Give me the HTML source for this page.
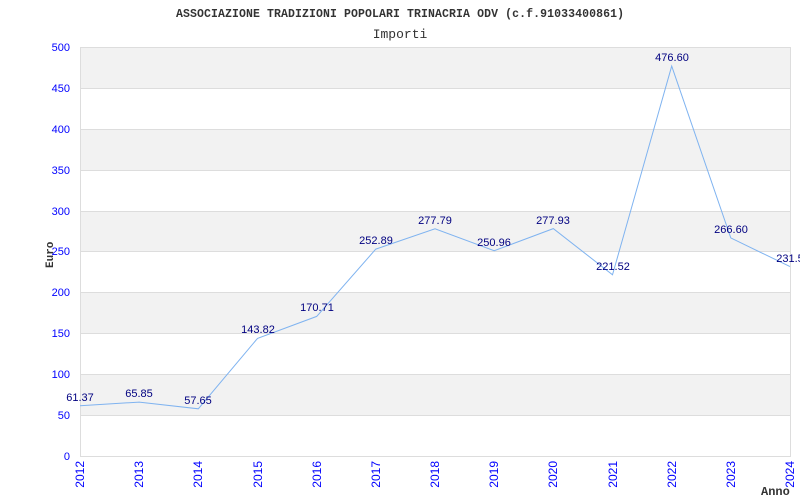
<!DOCTYPE html>
<html><head><meta charset="utf-8"><style>body{margin:0;background:#fff}svg{display:block}</style></head><body>
<svg width="800" height="500" xmlns="http://www.w3.org/2000/svg">
<rect width="800" height="500" fill="#fff"/>
<text x="176" y="17" textLength="448" font-family="Liberation Mono, monospace" font-weight="bold" font-size="11.5" fill="#333">ASSOCIAZIONE TRADIZIONI POPOLARI TRINACRIA ODV (c.f.91033400861)</text>
<text x="400" y="38" text-anchor="middle" font-family="Liberation Mono, monospace" font-size="13" fill="#333">Importi</text>
<g fill="#f2f2f2">
<rect x="80" y="47" width="710" height="41"/>
<rect x="80" y="129" width="710" height="41"/>
<rect x="80" y="211" width="710" height="40"/>
<rect x="80" y="292" width="710" height="41"/>
<rect x="80" y="374" width="710" height="41"/>
</g>
<g stroke="#ddd" stroke-width="1">
<line x1="80" y1="47.5" x2="790" y2="47.5"/><line x1="80" y1="88.5" x2="790" y2="88.5"/>
<line x1="80" y1="129.5" x2="790" y2="129.5"/><line x1="80" y1="170.5" x2="790" y2="170.5"/>
<line x1="80" y1="211.5" x2="790" y2="211.5"/><line x1="80" y1="251.5" x2="790" y2="251.5"/>
<line x1="80" y1="292.5" x2="790" y2="292.5"/><line x1="80" y1="333.5" x2="790" y2="333.5"/>
<line x1="80" y1="374.5" x2="790" y2="374.5"/><line x1="80" y1="415.5" x2="790" y2="415.5"/>
<line x1="80" y1="456.5" x2="790" y2="456.5"/>
<line x1="80.5" y1="47" x2="80.5" y2="457"/><line x1="790.5" y1="47" x2="790.5" y2="457"/>
</g>
<g font-family="Liberation Sans, sans-serif" font-size="11" fill="#0000ff" text-anchor="end">
<text x="70" y="51">500</text><text x="70" y="92">450</text><text x="70" y="133">400</text>
<text x="70" y="174">350</text><text x="70" y="215">300</text><text x="70" y="255">250</text>
<text x="70" y="296">200</text><text x="70" y="337">150</text><text x="70" y="378">100</text>
<text x="70" y="419">50</text><text x="70" y="460">0</text>
</g>
<g font-family="Liberation Sans, sans-serif" font-size="12" fill="#0000ff" text-anchor="end">
<text transform="translate(84,461) rotate(-90)">2012</text>
<text transform="translate(143,461) rotate(-90)">2013</text>
<text transform="translate(202,461) rotate(-90)">2014</text>
<text transform="translate(262,461) rotate(-90)">2015</text>
<text transform="translate(321,461) rotate(-90)">2016</text>
<text transform="translate(380,461) rotate(-90)">2017</text>
<text transform="translate(439,461) rotate(-90)">2018</text>
<text transform="translate(498,461) rotate(-90)">2019</text>
<text transform="translate(557,461) rotate(-90)">2020</text>
<text transform="translate(617,461) rotate(-90)">2021</text>
<text transform="translate(676,461) rotate(-90)">2022</text>
<text transform="translate(735,461) rotate(-90)">2023</text>
<text transform="translate(794,461) rotate(-90)">2024</text>
</g>
<text x="761" y="495" font-family="Liberation Mono, monospace" font-weight="bold" font-size="12" fill="#333">Anno</text>
<text transform="translate(53,268) rotate(-90)" font-family="Liberation Mono, monospace" font-weight="bold" font-size="11" fill="#333">Euro</text>
<polyline fill="none" stroke="#7fb3f0" stroke-width="1" points="80,405.8 139.2,402.1 198.3,408.8 257.5,338.4 316.7,316.4 375.8,249.1 435,228.8 494.2,250.7 553.3,228.6 612.5,274.8 671.7,66.1 730.8,237.9 790,266.6"/>
<g font-family="Liberation Sans, sans-serif" font-size="11" fill="#000080" text-anchor="middle">
<text x="80" y="401">61.37</text><text x="139" y="397">65.85</text><text x="198" y="404">57.65</text>
<text x="258" y="333">143.82</text><text x="317" y="311">170.71</text><text x="376" y="244">252.89</text>
<text x="435" y="224">277.79</text><text x="494" y="246">250.96</text><text x="553" y="224">277.93</text>
<text x="613" y="270">221.52</text><text x="672" y="61">476.60</text><text x="731" y="233">266.60</text>
<text x="790" y="262">231.5</text>
</g>
</svg>
</body></html>
